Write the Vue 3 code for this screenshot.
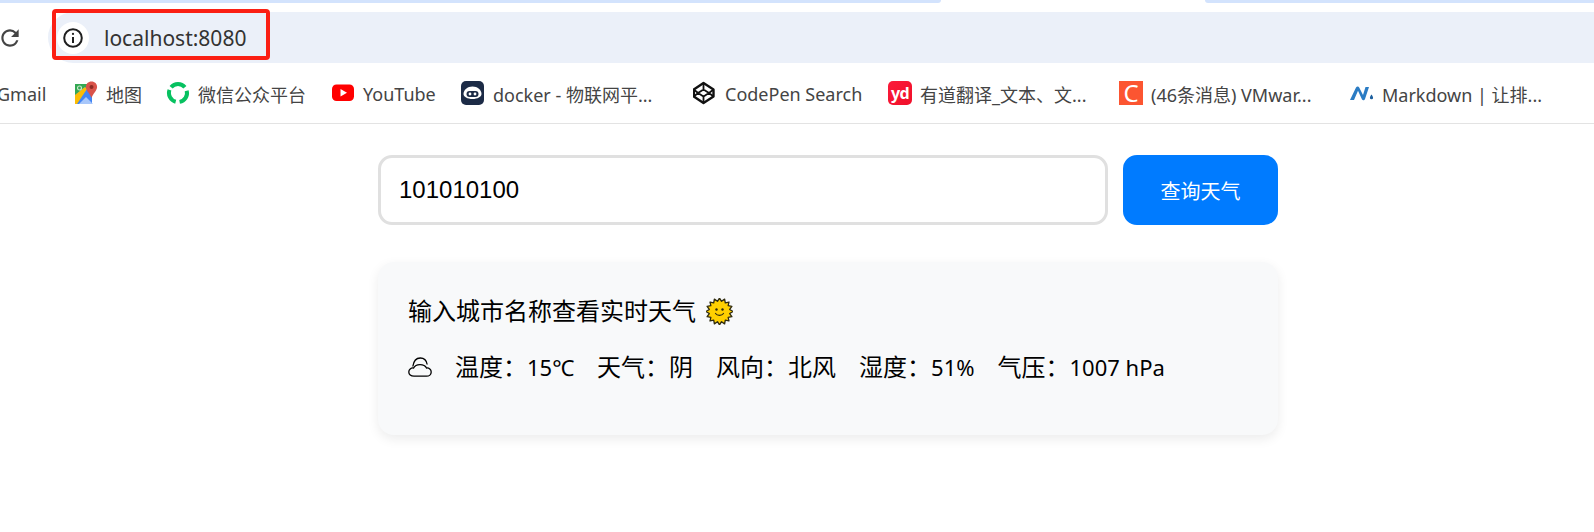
<script setup>
import { computed, ref } from 'vue'

const cityId = ref('101010100')

const bookmarks = [
  { name: 'Gmail', icon: 'none', width: 77 },
  { name: '地图', icon: 'maps', width: 92 },
  { name: '微信公众平台', icon: 'wechat', width: 165 },
  { name: 'YouTube', icon: 'youtube', width: 130 },
  { name: 'docker - 物联网平...', icon: 'docker', width: 232 },
  { name: 'CodePen Search', icon: 'codepen', width: 195 },
  { name: '有道翻译_文本、文...', icon: 'youdao', width: 231 },
  { name: '(46条消息) VMwar...', icon: 'csdn', width: 231 },
  { name: 'Markdown | 让排...', icon: 'markdown', width: 200 }
]

const stats = [
  { label: '温度：', value: '15℃', latin: true },
  { label: '天气：', value: '阴' },
  { label: '风向：', value: '北风' },
  { label: '湿度：', value: '51%', latin: true },
  { label: '气压：', value: '1007 hPa', latin: true }
]

// 太阳的锯齿外圈
const sunPoints = computed(() => {
  const pts = []
  for (let i = 0; i < 32; i++) {
    const r = i % 2 === 0 ? 13.4 : 10.4
    const a = (Math.PI * i) / 16
    pts.push(`${(13.5 + r * Math.sin(a)).toFixed(2)},${(13.5 - r * Math.cos(a)).toFixed(2)}`)
  }
  return pts.join(' ')
})
</script>

<template>
  <div class="browser">
    <div class="tab-strip">
      <span class="tab-left"></span>
      <span class="tab-right"></span>
    </div>

    <div class="toolbar">
      <svg class="reload" viewBox="0 0 24 24" width="26" height="26" fill="#444">
        <path d="M17.65 6.35A7.958 7.958 0 0 0 12 4c-4.42 0-7.99 3.58-7.99 8s3.57 8 7.99 8c3.73 0 6.84-2.55 7.73-6h-2.08A5.99 5.99 0 0 1 12 18c-3.31 0-6-2.69-6-6s2.69-6 6-6c1.66 0 3.14.69 4.22 1.78L13 11h7V4l-2.35 2.35z" />
      </svg>
      <div class="address">
        <span class="site-badge">
          <svg viewBox="0 0 20 20" width="20" height="20" fill="none" stroke="#1f1f1f" stroke-width="2">
            <circle cx="10" cy="10" r="8.8" />
            <line x1="10" y1="9" x2="10" y2="15" />
            <circle cx="10" cy="5.9" r="1.1" fill="#1f1f1f" stroke="none" />
          </svg>
        </span>
        <span class="url">localhost:8080</span>
      </div>
      <div class="highlight"></div>
    </div>

    <div class="bookmarks">
      <div
        v-for="item in bookmarks"
        :key="item.name"
        class="bookmark"
        :style="{ width: item.width + 'px' }"
      >
        <span v-if="item.icon !== 'none'" class="bm-icon">
          <svg v-if="item.icon === 'maps'" viewBox="0 0 24 24" width="24" height="24">
            <path d="M1 3h17v20H1z" fill="#34a853" />
            <path d="M1 23V14L11 6l7 6v11z" fill="#4285f4" />
            <path d="M1 14 11 6l2 2L3 23H1z" fill="#fbbc04" />
            <path d="M5 23l7-7 7 7z" fill="#a8c7fa" />
            <circle cx="5.5" cy="7" r="2" fill="none" stroke="#c8e6c9" stroke-width="1.2" />
            <path d="M17.5 0.5c-3.4 0-5.6 2.5-5.6 5.4 0 3.6 4.2 6.6 5.6 11 1.4-4.4 5.6-7.4 5.6-11 0-2.9-2.2-5.4-5.6-5.4z" fill="#d9534a" />
            <circle cx="17.5" cy="6" r="2" fill="#8e2b24" />
          </svg>
          <svg v-else-if="item.icon === 'wechat'" viewBox="0 0 24 24" width="24" height="24" fill="none" stroke="#07c160" stroke-width="4">
            <path d="M5.1 6.2A9 9 0 0 1 18.9 6.2" />
            <path d="M20.7 9.7A9 9 0 0 1 13.6 20.9" />
            <path d="M9.7 20.7A9 9 0 0 1 3.5 8.9" />
          </svg>
          <svg v-else-if="item.icon === 'youtube'" viewBox="0 0 24 24" width="24" height="24">
            <rect x="1" y="3.5" width="22" height="16.5" rx="4.5" fill="#f00" />
            <path d="M9.5 8v7.5l6.5-3.75z" fill="#fff" />
          </svg>
          <svg v-else-if="item.icon === 'docker'" viewBox="0 0 24 24" width="24" height="24">
            <rect width="23" height="24" rx="5" fill="#1c2b46" />
            <path d="M2.5 13c0-4 4-7.500 9-7.500s9 3.500 9 7.500c0 2.800-4 5-9 5s-9-2.200-9-5z" fill="#fff" />
            <rect x="5.5" y="10" width="12" height="6" rx="3" fill="#1c2b46" />
            <circle cx="9" cy="13" r="1.4" fill="#fff" />
            <circle cx="14" cy="13" r="1.4" fill="#fff" />
          </svg>
          <svg v-else-if="item.icon === 'codepen'" viewBox="0 0 24 24" width="24" height="24" fill="none" stroke="#111" stroke-width="2.4" stroke-linejoin="round">
            <path d="M10.5 2 20.5 8.5v7L10.5 22 .8 15.5v-7z" />
            <path d="M10.5 2v6.5L5 12l5.5 3.5V22M10.5 8.5 16 12l-5.5 3.5M.8 8.5 5 12 .8 15.5M20.5 8.5 16 12l4.5 3.5" stroke-width="1.8" />
          </svg>
          <span v-else-if="item.icon === 'youdao'" class="yd-logo">yd</span>
          <span v-else-if="item.icon === 'csdn'" class="csdn-logo">C</span>
          <svg v-else-if="item.icon === 'markdown'" viewBox="0 0 24 24" width="24" height="24">
            <path d="M0 19 6 6.5C6.8 5 8.6 5 9.2 6.5L13 14 15.5 6h3.5L15 18c-.6 1.600-2.400 1.700-3.100.2L8 9.800 4 19z" fill="#2b7cc4" />
            <path d="M21.5 13.5c.8 1.200 1.600 2.200 1.600 3.200a1.600 1.600 0 0 1-3.200 0c0-1 .8-2 1.600-3.200z" fill="#1c5f9e" />
          </svg>
        </span>
        <span class="bm-name">{{ item.name }}</span>
      </div>
    </div>

    <main class="page">
      <div class="search-row">
        <input v-model="cityId" class="city-input" type="text" />
        <button class="search-btn">查询天气</button>
      </div>

      <section class="weather-card">
        <div class="card-title">
          <span>输入城市名称查看实时天气</span>
          <svg viewBox="0 0 27 27" width="27" height="27">
            <polygon :points="sunPoints" fill="#ffd000" stroke="#2e2a10" stroke-width="1.3" stroke-linejoin="round" />
            <circle cx="10.5" cy="11.5" r="1.2" fill="#2e2a10" />
            <circle cx="16.5" cy="11.5" r="1.2" fill="#2e2a10" />
            <path d="M9.5 15.5c1.8 2.4 6.2 2.4 8 0" fill="none" stroke="#2e2a10" stroke-width="1.2" stroke-linecap="round" />
          </svg>
        </div>
        <div class="card-stats">
          <svg class="cloud" viewBox="0 0 24 20" width="24" height="20" fill="none" stroke="#000" stroke-width="1.3">
            <path d="M6 19.2C2.8 19.2.8 17.2.8 14.9.8 12.5 3 10.6 5.600 11c1-2.200 3.400-3.400 6.400-3.400s5.500 1.300 6.500 3.400c2.600-.3 4.700 1.500 4.700 3.900 0 2.400-2 4.300-4.700 4.300z" />
            <path d="M4.800 9.500C5.600 4 8.600 1 12.300 1c3.400 0 6.200 2.600 6.900 6.500" />
          </svg>
          <span v-for="s in stats" :key="s.label">{{ s.label }}<span :class="{ latin: s.latin }">{{ s.value }}</span></span>
        </div>
      </section>
    </main>
  </div>
</template>

<style scoped>
.browser {
  width: 1594px;
  height: 532px;
  overflow: hidden;
  background: #fff;
  font-family: "Noto Sans", "Noto Sans CJK SC", sans-serif;
}

.tab-strip {
  display: flex;
  justify-content: space-between;
  height: 12px;
}

.tab-left,
.tab-right {
  display: block;
  height: 3px;
  background: #d3e3fd;
}

.tab-left {
  width: 941px;
  border-bottom-right-radius: 6px;
}

.tab-right {
  width: 389px;
  border-bottom-left-radius: 6px;
}

.toolbar {
  position: relative;
  display: flex;
  align-items: center;
  height: 51px;
}

.reload {
  flex: none;
  margin-left: -3px;
}

.address {
  flex: 1;
  display: flex;
  align-items: center;
  height: 51px;
  margin-left: 25px;
  background: #ebf0f9;
  border-radius: 26px 0 0 26px;
}

.site-badge {
  display: flex;
  align-items: center;
  justify-content: center;
  width: 32px;
  height: 32px;
  margin-left: 9px;
  border-radius: 50%;
  background: #fff;
}

.url {
  margin-left: 15px;
  font-size: 21px;
  color: #333;
}

/* 截图里手动标注的红框 */
.highlight {
  position: absolute;
  left: 52px;
  top: -3px;
  width: 218px;
  height: 51px;
  box-sizing: border-box;
  border: 4px solid #fb1f14;
  border-radius: 4px;
}

.bookmarks {
  display: flex;
  align-items: center;
  height: 60px;
  box-sizing: content-box;
  margin-left: -3px;
  border-bottom: 1px solid #e3e3e3;
}

.bookmark {
  flex: none;
  display: flex;
  align-items: center;
  gap: 8px;
  white-space: nowrap;
}

.bm-icon {
  flex: none;
  display: flex;
  width: 24px;
  height: 24px;
}

.bm-name {
  padding-top: 2px;
  font-size: 18px;
  color: #444;
}

.yd-logo {
  display: flex;
  align-items: center;
  justify-content: center;
  width: 24px;
  height: 24px;
  border-radius: 5px;
  background: linear-gradient(135deg, #fb1b3a, #f0102a);
  color: #fff;
  font-size: 16px;
  font-weight: 700;
  letter-spacing: -0.5px;
}

.csdn-logo {
  display: flex;
  align-items: center;
  justify-content: center;
  width: 24px;
  height: 24px;
  background: #fc5531;
  color: #fff;
  font-size: 24px;
  line-height: 1;
}

.page {
  width: 900px;
  margin-left: 378px;
  padding-top: 31px;
}

.search-row {
  display: flex;
  gap: 15px;
}

.city-input {
  flex: 1;
  min-width: 0;
  height: 70px;
  box-sizing: border-box;
  padding: 0 18px;
  border: 3px solid #e0e0e0;
  border-radius: 14px;
  outline: none;
  background: #fff;
  font-family: "Liberation Sans", sans-serif;
  font-size: 24px;
  color: #000;
}

.search-btn {
  flex: none;
  width: 155px;
  height: 70px;
  border: none;
  border-radius: 14px;
  background: #007bff;
  color: #fff;
  font-family: "Noto Sans CJK SC", sans-serif;
  font-size: 20px;
  cursor: pointer;
}

.weather-card {
  margin-top: 37px;
  height: 173px;
  box-sizing: border-box;
  padding: 31px 30px 30px;
  border-radius: 16px;
  background: #f8f9fa;
  box-shadow: 0 4px 12px rgba(0, 0, 0, 0.08);
  color: #000;
}

.card-title {
  display: flex;
  align-items: center;
  gap: 10px;
  font-size: 24px;
  line-height: 36px;
}

.card-stats {
  display: flex;
  align-items: center;
  gap: 23px;
  margin-top: 20px;
  font-size: 24px;
  line-height: 36px;
}

.latin {
  font-size: 22px;
}

.cloud {
  flex: none;
}
</style>
